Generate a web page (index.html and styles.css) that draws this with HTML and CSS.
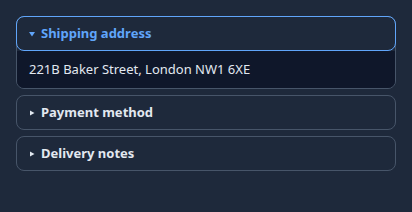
FILE: index.html
```html
<!DOCTYPE html>
<html lang="en">
<head>
<meta charset="utf-8">
<title>Checkout</title>
<link rel="stylesheet" href="styles.css">
</head>
<body>
<div class="accordion">
  <details class="item" open>
    <summary class="head"><svg class="caret" width="6" height="6" viewBox="0 0 6 6"><path d="M0 1H6L3 5.5Z" fill="currentColor"/></svg>Shipping address</summary>
    <div class="body">221B Baker Street, London NW1 6XE</div>
  </details>
  <details class="item">
    <summary class="head"><svg class="caret" width="6" height="6" viewBox="0 0 6 6"><path d="M1 0.5V5.5L5.5 3Z" fill="currentColor"/></svg>Payment method</summary>
  </details>
  <details class="item">
    <summary class="head"><svg class="caret" width="6" height="6" viewBox="0 0 6 6"><path d="M1 0.5V5.5L5.5 3Z" fill="currentColor"/></svg>Delivery notes</summary>
  </details>
</div>
</body>
</html>
```
FILE: styles.css
```css
html, body {
  margin: 0;
  background: #1e293b;
}
body {
  padding: 16px;
  font-family: "Noto Sans", "Open Sans", sans-serif;
  font-size: 13px;
  color: #e2e8f0;
}
.accordion {
  display: flex;
  flex-direction: column;
  gap: 6px;
}
.item {
  border: 1px solid #475569;
  border-radius: 8px;
}
.head {
  display: flex;
  align-items: center;
  gap: 6px;
  list-style: none;
  padding: 8px 12px;
  line-height: 17px;
  font-weight: 700;
  color: #e2e8f0;
  cursor: pointer;
}
.head::-webkit-details-marker { display: none; }
.caret { flex: none; }
.item[open] > .head {
  margin: -1px -1px 0;
  border: 1px solid #60a5fa;
  border-radius: 8px;
  color: #60a5fa;
}
.body {
  background: #0f172a;
  padding: 10px 12px;
  line-height: 17px;
  border-radius: 0 0 7px 7px;
}
```
